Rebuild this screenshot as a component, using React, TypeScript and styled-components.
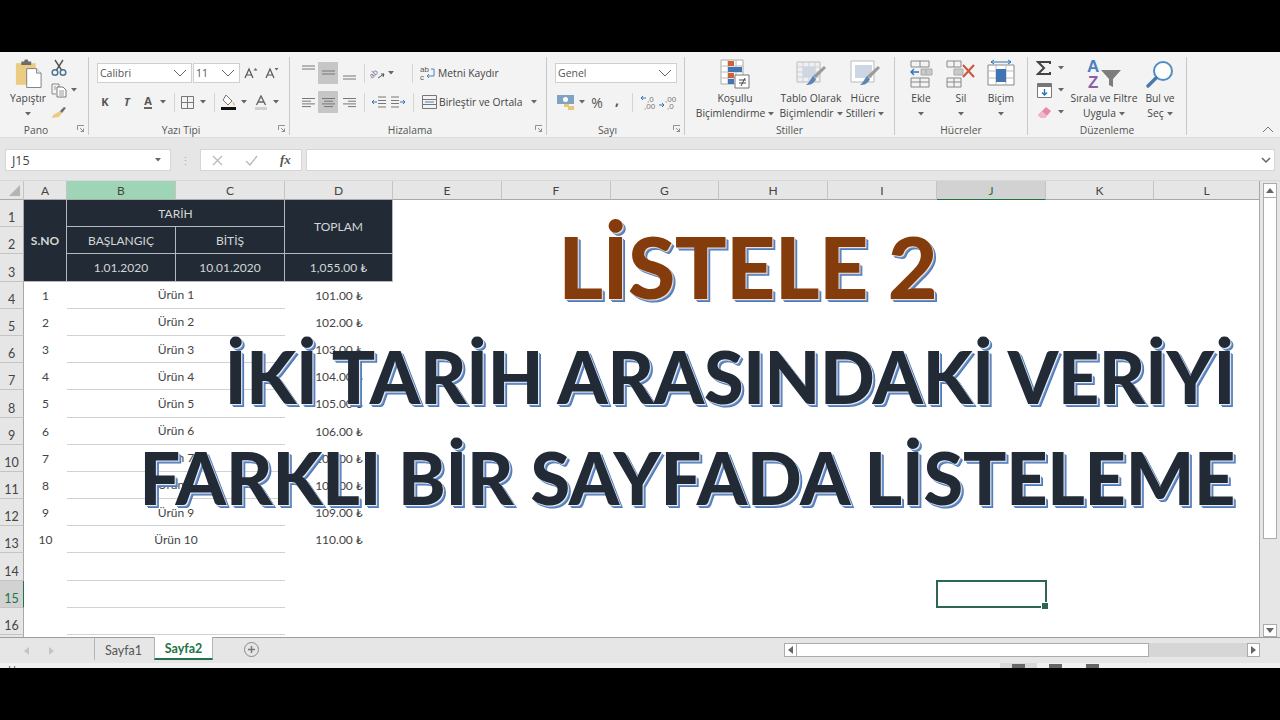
import styled, { createGlobalStyle } from "styled-components";

// styles

const GlobalStyle = createGlobalStyle`
  html, body {
    margin: 0;
    padding: 0;
    background: #000;
    overflow: hidden;
  }
  body {
    font-family: "Open Sans", "Liberation Sans", sans-serif;
  }
`;

const Page = styled.div`
  width: 1280px;
  height: 720px;
  background: #000;
  padding-top: 52px;
  box-sizing: border-box;
`;

const Frame = styled.div`
  width: 1280px;
  height: 616px;
  display: flex;
  flex-direction: column;
  overflow: hidden;
  background: #e6e6e6;
`;

const Ribbon = styled.div`
  height: 86px;
  box-sizing: border-box;
  display: flex;
  background: #f3f3f3;
  border-bottom: 1px solid #dcdcdc;
  padding-top: 5px;
  color: #444;
  font-size: 10.3px;
  flex: none;
`;

const Group = styled.div<{ $w: number }>`
  width: ${(p) => p.$w}px;
  height: 78px;
  flex: none;
  box-sizing: border-box;
  border-right: 1px solid #c8c8c8;
  display: flex;
  flex-direction: column;
`;

const GroupBody = styled.div<{ $pad: number; $row?: boolean }>`
  height: 66px;
  box-sizing: border-box;
  padding-left: ${(p) => p.$pad}px;
  display: flex;
  flex-direction: ${(p) => (p.$row ? "row" : "column")};
`;

const GroupFoot = styled.div<{ $shift?: number }>`
  height: 12px;
  display: grid;
  grid-template-columns: 14px 1fr 14px;
  align-items: center;
  justify-items: center;
  line-height: 12px;
  color: #555;
  span {
    transform: translate(${(p) => p.$shift ?? 0}px, 1px);
  }
`;

const Collapse = styled.div`
  flex: 1;
  display: flex;
  justify-content: flex-end;
  align-items: flex-end;
  padding: 0 6px 2px 0;
  height: 76px;
`;

const Row = styled.div<{ $top: number }>`
  display: flex;
  align-items: center;
  height: 22px;
  margin-top: ${(p) => p.$top}px;
  white-space: nowrap;
`;

const Slot = styled.div<{ $w: number; $active?: boolean }>`
  width: ${(p) => p.$w}px;
  height: 22px;
  flex: none;
  display: flex;
  align-items: center;
  justify-content: center;
  background: ${(p) => (p.$active ? "#c6c6c6" : "transparent")};
  color: #555;
`;

const Sep = styled.div<{ $l: number; $r: number }>`
  width: 1px;
  height: 19px;
  flex: none;
  background: #d4d4d4;
  margin: 0 ${(p) => p.$r}px 0 ${(p) => p.$l}px;
`;

const Select = styled.div<{ $w: number; $ml?: number }>`
  width: ${(p) => p.$w}px;
  height: 20px;
  flex: none;
  box-sizing: border-box;
  margin-left: ${(p) => p.$ml ?? 0}px;
  background: #fff;
  border: 1px solid #cfcfcf;
  display: flex;
  align-items: center;
  justify-content: space-between;
  padding: 0 4px 0 2px;
  font-size: 10.5px;
  color: #555;
`;

const FmtLetter = styled.span<{ $italic?: boolean; $under?: boolean }>`
  font-weight: 700;
  font-size: 11px;
  font-style: ${(p) => (p.$italic ? "italic" : "normal")};
  border-bottom: ${(p) => (p.$under ? "2px solid #666" : "none")};
  line-height: 12px;
  color: #555;
`;

const Percent = styled.span`
  font-size: 14px;
  color: #555;
`;

const Comma = styled.span`
  font-size: 14px;
  font-weight: 700;
  line-height: 10px;
  padding-bottom: 5px;
  color: #555;
`;

const Big = styled.div<{ $w: number }>`
  width: ${(p) => p.$w}px;
  flex: none;
  display: flex;
  flex-direction: column;
  align-items: center;
  white-space: nowrap;
`;

const BigIcon = styled.div`
  height: 34px;
  display: flex;
  align-items: center;
  justify-content: center;
`;

const BigLine = styled.div`
  height: 15px;
  line-height: 15px;
  display: flex;
  align-items: center;
  gap: 3px;
`;

const SmallColumn = styled.div<{ $w: number }>`
  width: ${(p) => p.$w}px;
  flex: none;
  display: flex;
  flex-direction: column;
  justify-content: flex-start;
`;

const SmallRow = styled.div`
  height: 22px;
  display: flex;
  align-items: center;
`;

const Formula = styled.div`
  height: 43px;
  flex: none;
  box-sizing: border-box;
  display: flex;
  align-items: flex-start;
  padding: 11px 5px 0 5px;
  background: #e6e6e6;
  border-bottom: 1px solid #d8d8d8;
`;

const NameBox = styled.div`
  width: 166px;
  height: 22px;
  box-sizing: border-box;
  background: #fff;
  border: 1px solid #d6d6d6;
  display: flex;
  align-items: center;
  justify-content: space-between;
  padding: 0 9px 0 6px;
  font-size: 12.5px;
  color: #444;
`;

const Dots = styled.div`
  width: 29px;
  height: 22px;
  display: flex;
  align-items: center;
  justify-content: center;
  color: #aaa;
  font-size: 11px;
`;

const FxBox = styled.div`
  width: 102px;
  height: 22px;
  box-sizing: border-box;
  background: #fff;
  border: 1px solid #d6d6d6;
  display: flex;
  align-items: center;
  padding-left: 11px;
  gap: 22px;
`;

const FxMark = styled.span`
  font-family: "Liberation Serif", serif;
  font-style: italic;
  font-weight: 700;
  font-size: 13px;
  color: #555;
`;

const FormulaInput = styled.div`
  flex: 1;
  height: 22px;
  margin-left: 4px;
  box-sizing: border-box;
  background: #fff;
  border: 1px solid #d6d6d6;
  display: flex;
  align-items: center;
  justify-content: flex-end;
  padding-right: 3px;
`;

const SheetArea = styled.div`
  height: 456px;
  flex: none;
  display: flex;
  overflow: hidden;
`;

const Sheet = styled.div`
  position: relative;
  width: 1260px;
  height: 456px;
  flex: none;
  overflow: hidden;
  background: #fff;
  border-right: 1px solid #a8a8a8;
  box-sizing: border-box;
`;

const CellGrid = styled.div`
  display: grid;
  grid-template-columns: 24px 43px 109px 109px 108px 109px 109px 108px 109px 109px 109px 108px 106px;
  grid-template-rows: 19px repeat(17, 27.2px);
  font-family: Lato, "Liberation Sans", sans-serif;
  font-size: 12px;
  color: #444;
`;

const Corner = styled.div`
  grid-column: 1;
  grid-row: 1;
  background: #e6e6e6;
  border-right: 1px solid #c4c4c4;
  border-bottom: 1px solid #a8a8a8;
  display: flex;
  align-items: flex-end;
  justify-content: flex-end;
  padding: 0 3px 3px 0;
`;

const ColHead = styled.div<{ $mode?: "sel" | "active" }>`
  box-sizing: border-box;
  background: ${(p) =>
    p.$mode === "sel" ? "#9fd5b7" : p.$mode === "active" ? "#d2d2d2" : "#e6e6e6"};
  border-right: 1px solid #c4c4c4;
  border-bottom: 1px solid ${(p) => (p.$mode === "active" ? "#217346" : "#a8a8a8")};
  display: flex;
  align-items: center;
  justify-content: center;
  color: ${(p) => (p.$mode === "active" ? "#217346" : "#444")};
  font-size: 12px;
`;

const RowHead = styled.div<{ $active?: boolean }>`
  grid-column: 1;
  box-sizing: border-box;
  background: ${(p) => (p.$active ? "#d2d2d2" : "#e6e6e6")};
  border-right: 1px solid ${(p) => (p.$active ? "#217346" : "#a8a8a8")};
  border-bottom: 1px solid #c4c4c4;
  display: flex;
  align-items: flex-end;
  justify-content: center;
  line-height: 17px;
  color: ${(p) => (p.$active ? "#217346" : "#444")};
  font-size: 12.5px;
`;

const HeadCell = styled.div<{ $col: string; $row: string; $bold?: boolean }>`
  grid-column: ${(p) => p.$col};
  grid-row: ${(p) => p.$row};
  box-sizing: border-box;
  background: #222b35;
  border-right: 1px solid #b5b8bc;
  border-bottom: 1px solid #b5b8bc;
  display: flex;
  align-items: center;
  justify-content: center;
  color: #d4d6d8;
  font-size: 12px;
  font-weight: ${(p) => (p.$bold ? 700 : 400)};
`;

const DataCell = styled.div<{ $col: string; $row: number; $line?: boolean }>`
  grid-column: ${(p) => p.$col};
  grid-row: ${(p) => p.$row};
  box-sizing: border-box;
  border-bottom: ${(p) => (p.$line ? "1px solid #d2d2d2" : "none")};
  display: flex;
  align-items: center;
  justify-content: center;
  color: #444;
`;

const SelectedCell = styled.div`
  grid-column: 11;
  grid-row: 16;
  position: relative;
  box-sizing: border-box;
  margin: -1px -1px 0 -1px;
  border: 2px solid #2f6650;
`;

const FillHandle = styled.div`
  position: absolute;
  right: -4px;
  bottom: -4px;
  width: 6px;
  height: 6px;
  background: #2f6650;
  border: 1px solid #fff;
`;

const TitleLayer = styled.div`
  position: absolute;
  top: 0;
  left: 0;
  right: 0;
  display: flex;
  flex-direction: column;
  align-items: flex-end;
  padding: 30px 24px 0 0;
  font-family: Lato, "Open Sans", sans-serif;
  font-weight: 900;
  pointer-events: none;
  white-space: nowrap;
`;

const TitleMain = styled.div`
  font-size: 86px;
  line-height: 110px;
  height: 110px;
  margin-right: 298px;
  letter-spacing: -0.6px;
  color: #843c0c;
  text-shadow: 1px 1px 0 #f0e0d6, 2px 2px 0 #6a92cc, 3px 3px 0 #5079b5;
`;

const TitleLine = styled.div<{ $top: number; $track: number }>`
  font-size: 72px;
  line-height: 90px;
  height: 90px;
  margin-top: ${(p) => p.$top}px;
  letter-spacing: ${(p) => p.$track}px;
  color: #222a35;
  text-shadow: 1px 1px 0 #e8eef8, 2px 2px 0 #6a92cc, 3px 3px 0 #5079b5;
`;

const VScroll = styled.div`
  width: 20px;
  flex: none;
  display: flex;
  flex-direction: column;
  align-items: center;
  padding-top: 2px;
  box-sizing: border-box;
`;

const ScrollBtn = styled.div<{ $w: number; $h: number }>`
  width: ${(p) => p.$w}px;
  height: ${(p) => p.$h}px;
  flex: none;
  box-sizing: border-box;
  background: #fff;
  border: 1px solid #ababab;
  display: flex;
  align-items: center;
  justify-content: center;
`;

const VThumb = styled.div`
  width: 14px;
  height: 341px;
  box-sizing: border-box;
  background: #fff;
  border: 1px solid #ababab;
  border-top: none;
`;

const VTrack = styled.div`
  flex: 1;
  width: 14px;
`;

const TabBar = styled.div`
  height: 26px;
  flex: none;
  box-sizing: border-box;
  display: flex;
  align-items: flex-start;
  background: #e6e6e6;
  border-top: 1px solid #9d9d9d;
  font-family: Lato, "Liberation Sans", sans-serif;
  font-size: 12.5px;
  color: #555;
`;

const TabNav = styled.div`
  width: 94px;
  height: 25px;
  display: flex;
  align-items: center;
  padding-left: 24px;
  gap: 20px;
  box-sizing: border-box;
`;

const Tab = styled.div<{ $active?: boolean }>`
  height: ${(p) => (p.$active ? "23px" : "22px")};
  width: ${(p) => (p.$active ? "59px" : "60px")};
  margin-top: ${(p) => (p.$active ? "-1px" : "0")};
  padding: ${(p) => (p.$active ? "2px 0 0 0" : "2px 2px 0 0")};
  box-sizing: border-box;
  display: flex;
  align-items: center;
  justify-content: center;
  background: ${(p) => (p.$active ? "#fff" : "transparent")};
  border-left: 1px solid #b4b4b4;
  border-right: ${(p) => (p.$active ? "1px solid #b4b4b4" : "none")};
  border-bottom: ${(p) => (p.$active ? "2px solid #217346" : "none")};
  color: ${(p) => (p.$active ? "#217346" : "#555")};
  font-weight: ${(p) => (p.$active ? 700 : 400)};
`;

const AddSheet = styled.div`
  width: 15px;
  height: 15px;
  margin: 4px 0 0 31px;
  box-sizing: border-box;
  border: 1.5px solid #8a8a8a;
  border-radius: 50%;
  display: flex;
  align-items: center;
  justify-content: center;
`;

const HScroll = styled.div`
  width: 476px;
  height: 14px;
  margin: 5px 20px 0 auto;
  display: flex;
  background: #d6d6d6;
`;

const HThumb = styled.div`
  width: 352px;
  height: 14px;
  box-sizing: border-box;
  background: #fff;
  border: 1px solid #ababab;
  border-left: none;
`;

const HTrack = styled.div`
  flex: 1;
`;

const Status = styled.div`
  height: 5px;
  flex: none;
  overflow: hidden;
  display: flex;
  background: #f1f1f1;
  font-size: 11px;
  line-height: 14px;
  padding-left: 8px;
  color: #555;
`;

const ViewGroup = styled.div`
  margin-left: auto;
  margin-right: 169px;
  display: flex;
  height: 5px;
`;

const ViewItem = styled.div<{ $active?: boolean }>`
  width: 37px;
  height: 5px;
  padding-top: 1px;
  box-sizing: border-box;
  display: flex;
  justify-content: center;
  background: ${(p) => (p.$active ? "#d8d8d8" : "transparent")};
`;

const ViewMark = styled.div`
  width: 13px;
  height: 4px;
  background: #666;
`;

// icons

const Caret = () => (
  <svg width="6" height="4" viewBox="0 0 6 4">
    <path d="M0 0h6L3 3.5z" fill="#666" />
  </svg>
);

const Chevron = () => (
  <svg width="14" height="8" viewBox="0 0 14 8">
    <path d="M1 1l6 6 6-6" fill="none" stroke="#666" />
  </svg>
);

const Launcher = () => (
  <svg width="8" height="8" viewBox="0 0 8 8">
    <path d="M.5 5V.5H7M3 3l3.5 3.5M6.5 3.5v3h-3" fill="none" stroke="#777" strokeWidth=".8" />
  </svg>
);

const PasteIcon = () => (
  <svg width="27" height="30" viewBox="0 0 30 32">
    <path d="M1 4h22v24H1z" fill="#eccb83" />
    <path d="M7 2h3l1-2h3l1 2h3v4H7z" fill="#6d6d6d" />
    <path d="M13 10h11l5 5v16H13z" fill="#fff" stroke="#777" />
    <path d="M24 10v5h5" fill="#eee" stroke="#777" />
  </svg>
);

const ScissorsIcon = () => (
  <svg width="16" height="18" viewBox="0 0 16 18">
    <circle cx="4" cy="13.5" r="2.8" fill="none" stroke="#4d7396" strokeWidth="1.5" />
    <circle cx="12" cy="13.5" r="2.8" fill="none" stroke="#4d7396" strokeWidth="1.5" />
    <path d="M5.5 11L12 1M10.5 11L4 1" stroke="#555" strokeWidth="1.4" fill="none" />
  </svg>
);

const CopyIcon = () => (
  <svg width="16" height="15" viewBox="0 0 16 15">
    <path d="M1 1h7v3M1 1v10h4" fill="none" stroke="#888" />
    <path d="M6 4h6l3 3v7H6z" fill="#fff" stroke="#777" />
    <path d="M8 8h5M8 10h5M8 12h5M3 4h2M3 6h2" stroke="#999" />
  </svg>
);

const BrushIcon = () => (
  <svg width="16" height="14" viewBox="0 0 16 14">
    <path d="M9 6l2 2-3 4-7 1 1-3z" fill="#eccb83" />
    <path d="M9 6l4-4 2 1-4 5z" fill="#6f6f6f" />
  </svg>
);

const GrowA = ({ down }: { down?: boolean }) => (
  <svg width="14" height="12" viewBox="0 0 14 12">
    <path d="M1 11L5 2l4 9M2.6 8h4.8" fill="none" stroke="#555" strokeWidth="1.2" />
    <path d={down ? "M9.5 1h4L11.5 3.5z" : "M9.5 3.5h4L11.5 1z"} fill="#666" />
  </svg>
);

const BorderIcon = () => (
  <svg width="13" height="13" viewBox="0 0 13 13">
    <path d="M.5.5h12v12H.5zM6.5.5v12M.5 6.5h12" fill="none" stroke="#777" />
  </svg>
);

const FillIcon = () => (
  <svg width="16" height="16" viewBox="0 0 16 16">
    <path d="M5 1l6 6-4 4-5-5z" fill="#fff" stroke="#777" />
    <path d="M11 7l3 3-1 2z" fill="#e8b04a" />
    <path d="M0 13h15v3H0z" fill="#111" />
  </svg>
);

const ColorA = () => (
  <svg width="14" height="15" viewBox="0 0 14 15">
    <path d="M2.5 10L7 1l4.5 9M4 7h6" fill="none" stroke="#666" strokeWidth="1.4" />
    <path d="M1 12h12v3H1z" fill="#d0d0d0" />
  </svg>
);

const AlignLines = ({ kind }: { kind: "left" | "center" | "right" }) => {
  const x1 = { left: [1, 1, 1, 1], center: [1, 3, 1, 3], right: [1, 6, 1, 6] }[kind];
  const x2 = { left: [14, 10, 14, 10], center: [14, 12, 14, 12], right: [14, 14, 14, 14] }[kind];
  return (
    <svg width="15" height="11" viewBox="0 0 15 11">
      {x1.map((x, i) => (
        <path key={i} d={`M${x} ${1.5 + i * 2.7}H${x2[i]}`} stroke="#777" />
      ))}
    </svg>
  );
};

const VLines = ({ at }: { at: number }) => (
  <svg width="15" height="16" viewBox="0 0 15 16">
    <path d={`M1 ${at}h13M1 ${at + 3}h13`} stroke="#777" />
  </svg>
);

const OrientIcon = () => (
  <svg width="16" height="15" viewBox="0 0 16 15">
    <text x="2" y="13" fontSize="8" fill="#7a6a96" fontFamily="Liberation Sans" transform="rotate(-45 2 13)">
      ab
    </text>
    <path d="M8 12l6-4M14 8l-3 0M14 8l-1 3" stroke="#555" fill="none" />
  </svg>
);

const WrapIcon = () => (
  <svg width="16" height="15" viewBox="0 0 16 15">
    <text x="0" y="6" fontSize="8" fill="#555" fontFamily="Liberation Sans">ab</text>
    <text x="0" y="14" fontSize="8" fill="#555" fontFamily="Liberation Sans">c</text>
    <path d="M11 3h3v7H7M9 8l-2 2 2 2" stroke="#4f81bd" fill="none" />
  </svg>
);

const MergeIcon = () => (
  <svg width="15" height="14" viewBox="0 0 15 14">
    <path d="M.5.5h14v13H.5zM.5 4.5h14M.5 9.5h14" fill="none" stroke="#777" />
    <path d="M3 7h9" stroke="#4f81bd" />
  </svg>
);

const IndentIcon = ({ flip }: { flip?: boolean }) => (
  <svg width="15" height="12" viewBox="0 0 15 12" style={flip ? { transform: "scaleX(-1)" } : undefined}>
    <path d="M7 1h8M7 4.5h8M7 7.5h8M7 11h8" stroke="#777" />
    <path d="M6 6H1M3 4L1 6l2 2" stroke="#2f75b5" fill="none" />
  </svg>
);

const CurrencyIcon = () => (
  <svg width="19" height="17" viewBox="0 0 19 17">
    <path d="M0 1h17v9H0z" fill="#7fa3c0" />
    <circle cx="8.5" cy="5.5" r="2.5" fill="#fff" />
    <path d="M7 10h5v3H7zM11 12h6v4h-6z" fill="#e8c77a" />
  </svg>
);

const DecimalIcon = ({ flip }: { flip?: boolean }) => (
  <svg width="18" height="15" viewBox="0 0 18 15">
    <text x={flip ? 6 : 8} y="7" fontSize="8" fill="#777" fontFamily="Liberation Sans">
      {flip ? ",00" : ",0"}
    </text>
    <text x={flip ? 8 : 5} y="14" fontSize="8" fill="#777" fontFamily="Liberation Sans">
      {flip ? ",0" : ",00"}
    </text>
    <path d={flip ? "M0 10h5M3 8l2 2-2 2" : "M7 3H2M4 1L2 3l2 2"} stroke="#2f75b5" fill="none" />
  </svg>
);

const CondIcon = () => (
  <svg width="30" height="30" viewBox="0 0 30 30">
    <path d="M1 1h22v24H1z" fill="#fff" stroke="#aaa" />
    <path d="M1 7h22M1 13h22M1 19h22M8 1v24M16 1v24" stroke="#bbb" />
    <path d="M8 2h6v5H8zM8 14h6v5H8z" fill="#d0603a" />
    <path d="M8 8h14v5H8zM8 20h6v5H8z" fill="#3f74b5" />
    <path d="M15 16h14v13H15z" fill="#fff" stroke="#777" />
    <path d="M19 21h7M19 24h7M25 19l-4 8" stroke="#444" />
  </svg>
);

const TableStyleIcon = () => (
  <svg width="30" height="30" viewBox="0 0 30 30">
    <path d="M1 3h23v20H1z" fill="#eef0f3" stroke="#bbb" />
    <path d="M1 8h23M1 13h23M1 18h23M7 3v20M13 3v20M19 3v20" stroke="#cfcfcf" />
    <path d="M7 8h12v10H7z" fill="#cdd7e4" />
    <path d="M28 7l2 2-10 10-3-2z" fill="#9a9a9a" />
    <path d="M17 17l3 3c-2 5-6 6-10 6 3-2 4-6 7-9z" fill="#5b87b2" />
  </svg>
);

const CellStyleIcon = () => (
  <svg width="30" height="30" viewBox="0 0 30 30">
    <path d="M1 2h23v21H1z" fill="#fff" stroke="#bbb" />
    <path d="M5 6h17v13H5z" fill="#cdd7e4" />
    <path d="M28 7l2 2-10 10-3-2z" fill="#9a9a9a" />
    <path d="M17 17l3 3c-2 5-6 6-10 6 3-2 4-6 7-9z" fill="#5b87b2" />
  </svg>
);

const InsertIcon = () => (
  <svg width="26" height="28" viewBox="0 0 26 28">
    <path d="M3 1h18v6H3zM12 1v6M3 18h18v9H3zM12 18v9M3 22h18" fill="none" stroke="#888" />
    <path d="M13 9h11v6H13zM18 9v6" fill="#c9c9c9" stroke="#aaa" />
    <path d="M11 12H3M6 9l-3 3 3 3" stroke="#2f75b5" strokeWidth="1.4" fill="none" />
  </svg>
);

const DeleteIcon = () => (
  <svg width="30" height="28" viewBox="0 0 30 28">
    <path d="M1 1h14v6H1zM8 1v6M1 18h14v9H1zM8 18v9M1 22h14" fill="none" stroke="#888" />
    <path d="M8 9h9v6H8z" fill="#c9c9c9" stroke="#aaa" />
    <path d="M17 5l11 12M28 5L17 17" stroke="#c8573c" strokeWidth="2" fill="none" />
  </svg>
);

const FormatIcon = () => (
  <svg width="28" height="30" viewBox="0 0 28 30">
    <path d="M1 6h26v20H1z" fill="#fff" stroke="#888" />
    <path d="M1 12h26M1 19h26M9 6v20M19 6v20" stroke="#bbb" />
    <path d="M9 10h10v13H9z" fill="#3f74b5" />
    <path d="M4 3h20M4 3l3-2M4 3l3 2M24 3l-3-2M24 3l-3 2" stroke="#2f75b5" fill="none" />
  </svg>
);

const SigmaIcon = () => (
  <svg width="16" height="14" viewBox="0 0 16 14">
    <path d="M14 3V1H2l6 6-6 6h12v-2" fill="none" stroke="#444" strokeWidth="2" />
  </svg>
);

const FillDownIcon = () => (
  <svg width="15" height="15" viewBox="0 0 15 15">
    <path d="M.5.5h14v14H.5z" fill="#fff" stroke="#777" />
    <path d="M1 1h13v3H1z" fill="#777" />
    <path d="M7.5 6v6M5 9.5l2.5 2.5L10 9.5" stroke="#2f75b5" strokeWidth="1.4" fill="none" />
  </svg>
);

const EraserIcon = () => (
  <svg width="16" height="13" viewBox="0 0 16 13">
    <path d="M10 1l5 4-6 7H5L2 9z" fill="#e58aa5" />
    <path d="M2 9l3 3h4l2-2.5L6 5z" fill="#f0b9c8" />
  </svg>
);

const SortIcon = () => (
  <svg width="34" height="34" viewBox="0 0 34 34">
    <text x="0" y="15" fontSize="17" fontWeight="700" fill="#4f81bd" fontFamily="Liberation Sans">A</text>
    <text x="1" y="31" fontSize="17" fontWeight="700" fill="#8a5fa8" fontFamily="Liberation Sans">Z</text>
    <path d="M14 13h20l-8 9v8l-4-2v-6z" fill="#7d7d7d" />
  </svg>
);

const FindIcon = () => (
  <svg width="28" height="28" viewBox="0 0 28 28">
    <circle cx="17" cy="11" r="9" fill="#fff" stroke="#4f8ec4" strokeWidth="2" />
    <path d="M10 18L2 26" stroke="#4a78a8" strokeWidth="3.4" strokeLinecap="round" />
  </svg>
);

const TriDown = () => (
  <svg width="8" height="5" viewBox="0 0 8 5">
    <path d="M0 0h8L4 5z" fill="#666" />
  </svg>
);

const TriUp = () => (
  <svg width="8" height="5" viewBox="0 0 8 5">
    <path d="M0 5h8L4 0z" fill="#666" />
  </svg>
);

const TriLeft = ({ color = "#666" }: { color?: string }) => (
  <svg width="5" height="8" viewBox="0 0 5 8">
    <path d="M5 0v8L0 4z" fill={color} />
  </svg>
);

const TriRight = ({ color = "#666" }: { color?: string }) => (
  <svg width="5" height="8" viewBox="0 0 5 8">
    <path d="M0 0v8l5-4z" fill={color} />
  </svg>
);

// data

const COLUMNS = ["A", "B", "C", "D", "E", "F", "G", "H", "I", "J", "K", "L"];
const ROW_NUMBERS = Array.from({ length: 17 }, (_, i) => i + 1);
const ITEMS = Array.from({ length: 10 }, (_, i) => i + 1);
const EMPTY_ROWS = [14, 15, 16, 17];

const colMode = (c: string) => (c === "B" ? "sel" : c === "J" ? "active" : undefined);

// main app

export default function App() {
  return (
    <Page>
      <GlobalStyle />
      <Frame>
        <Ribbon>
          <Group $w={89}>
            <GroupBody $pad={8} $row>
              <Big $w={40}>
                <BigIcon>
                  <PasteIcon />
                </BigIcon>
                <BigLine>Yapıştır</BigLine>
                <BigLine>
                  <Caret />
                </BigLine>
              </Big>
              <SmallColumn $w={36}>
                <SmallRow>
                  <Slot $w={22}>
                    <ScissorsIcon />
                  </Slot>
                </SmallRow>
                <SmallRow>
                  <Slot $w={22}>
                    <CopyIcon />
                  </Slot>
                  <Slot $w={8}>
                    <Caret />
                  </Slot>
                </SmallRow>
                <SmallRow>
                  <Slot $w={22}>
                    <BrushIcon />
                  </Slot>
                </SmallRow>
              </SmallColumn>
            </GroupBody>
            <GroupFoot $shift={-8}>
              <i />
              <span>Pano</span>
              <Launcher />
            </GroupFoot>
          </Group>

          <Group $w={201}>
            <GroupBody $pad={8}>
              <Row $top={5}>
                <Select $w={95}>
                  Calibri
                  <Chevron />
                </Select>
                <Select $w={47} $ml={1}>
                  11
                  <Chevron />
                </Select>
                <Slot $w={21}>
                  <GrowA />
                </Slot>
                <Slot $w={22}>
                  <GrowA down />
                </Slot>
              </Row>
              <Row $top={7}>
                <Slot $w={16}>
                  <FmtLetter>K</FmtLetter>
                </Slot>
                <Slot $w={28}>
                  <FmtLetter $italic>T</FmtLetter>
                </Slot>
                <Slot $w={14}>
                  <FmtLetter $under>A</FmtLetter>
                </Slot>
                <Slot $w={16}>
                  <Caret />
                </Slot>
                <Sep $l={3} $r={2} />
                <Slot $w={20}>
                  <BorderIcon />
                </Slot>
                <Slot $w={12}>
                  <Caret />
                </Slot>
                <Sep $l={5} $r={4} />
                <Slot $w={20}>
                  <FillIcon />
                </Slot>
                <Slot $w={10}>
                  <Caret />
                </Slot>
                <Slot $w={24}>
                  <ColorA />
                </Slot>
                <Slot $w={6}>
                  <Caret />
                </Slot>
              </Row>
            </GroupBody>
            <GroupFoot $shift={-8}>
              <i />
              <span>Yazı Tipi</span>
              <Launcher />
            </GroupFoot>
          </Group>

          <Group $w={257}>
            <GroupBody $pad={8}>
              <Row $top={5}>
                <Slot $w={20}>
                  <VLines at={1} />
                </Slot>
                <Slot $w={20} $active>
                  <VLines at={6} />
                </Slot>
                <Slot $w={22}>
                  <VLines at={11} />
                </Slot>
                <Sep $l={4} $r={3} />
                <Slot $w={20}>
                  <OrientIcon />
                </Slot>
                <Slot $w={6}>
                  <Caret />
                </Slot>
                <Sep $l={18} $r={5} />
                <Slot $w={20}>
                  <WrapIcon />
                </Slot>
                <span>Metni Kaydır</span>
              </Row>
              <Row $top={7}>
                <Slot $w={20}>
                  <AlignLines kind="left" />
                </Slot>
                <Slot $w={20} $active>
                  <AlignLines kind="center" />
                </Slot>
                <Slot $w={22}>
                  <AlignLines kind="right" />
                </Slot>
                <Sep $l={4} $r={3} />
                <Slot $w={20}>
                  <IndentIcon />
                </Slot>
                <Slot $w={20}>
                  <IndentIcon flip />
                </Slot>
                <Sep $l={5} $r={5} />
                <Slot $w={20}>
                  <MergeIcon />
                </Slot>
                <span>Birleştir ve Ortala</span>
                <Slot $w={24}>
                  <Caret />
                </Slot>
              </Row>
            </GroupBody>
            <GroupFoot $shift={-8}>
              <i />
              <span>Hizalama</span>
              <Launcher />
            </GroupFoot>
          </Group>

          <Group $w={138}>
            <GroupBody $pad={8}>
              <Row $top={5}>
                <Select $w={122}>
                  Genel
                  <Chevron />
                </Select>
              </Row>
              <Row $top={7}>
                <Slot $w={22}>
                  <CurrencyIcon />
                </Slot>
                <Slot $w={10}>
                  <Caret />
                </Slot>
                <Slot $w={20}>
                  <Percent>%</Percent>
                </Slot>
                <Slot $w={20}>
                  <Comma>,</Comma>
                </Slot>
                <Sep $l={5} $r={5} />
                <Slot $w={20}>
                  <DecimalIcon />
                </Slot>
                <Slot $w={20}>
                  <DecimalIcon flip />
                </Slot>
              </Row>
            </GroupBody>
            <GroupFoot $shift={-8}>
              <i />
              <span>Sayı</span>
              <Launcher />
            </GroupFoot>
          </Group>

          <Group $w={210}>
            <GroupBody $pad={5} $row>
              <Big $w={90}>
                <BigIcon>
                  <CondIcon />
                </BigIcon>
                <BigLine>Koşullu</BigLine>
                <BigLine>
                  Biçimlendirme
                  <Caret />
                </BigLine>
              </Big>
              <Big $w={62}>
                <BigIcon>
                  <TableStyleIcon />
                </BigIcon>
                <BigLine>Tablo Olarak</BigLine>
                <BigLine>
                  Biçimlendir
                  <Caret />
                </BigLine>
              </Big>
              <Big $w={46}>
                <BigIcon>
                  <CellStyleIcon />
                </BigIcon>
                <BigLine>Hücre</BigLine>
                <BigLine>
                  Stilleri
                  <Caret />
                </BigLine>
              </Big>
            </GroupBody>
            <GroupFoot>
              <i />
              <span>Stiller</span>
              <i />
            </GroupFoot>
          </Group>

          <Group $w={133}>
            <GroupBody $pad={6} $row>
              <Big $w={40}>
                <BigIcon>
                  <InsertIcon />
                </BigIcon>
                <BigLine>Ekle</BigLine>
                <BigLine>
                  <Caret />
                </BigLine>
              </Big>
              <Big $w={40}>
                <BigIcon>
                  <DeleteIcon />
                </BigIcon>
                <BigLine>Sil</BigLine>
                <BigLine>
                  <Caret />
                </BigLine>
              </Big>
              <Big $w={40}>
                <BigIcon>
                  <FormatIcon />
                </BigIcon>
                <BigLine>Biçim</BigLine>
                <BigLine>
                  <Caret />
                </BigLine>
              </Big>
            </GroupBody>
            <GroupFoot>
              <i />
              <span>Hücreler</span>
              <i />
            </GroupFoot>
          </Group>

          <Group $w={159}>
            <GroupBody $pad={6} $row>
              <SmallColumn $w={34}>
                <SmallRow>
                  <Slot $w={20}>
                    <SigmaIcon />
                  </Slot>
                  <Slot $w={14}>
                    <Caret />
                  </Slot>
                </SmallRow>
                <SmallRow>
                  <Slot $w={20}>
                    <FillDownIcon />
                  </Slot>
                  <Slot $w={14}>
                    <Caret />
                  </Slot>
                </SmallRow>
                <SmallRow>
                  <Slot $w={20}>
                    <EraserIcon />
                  </Slot>
                  <Slot $w={14}>
                    <Caret />
                  </Slot>
                </SmallRow>
              </SmallColumn>
              <Big $w={72}>
                <BigIcon>
                  <SortIcon />
                </BigIcon>
                <BigLine>Sırala ve Filtre</BigLine>
                <BigLine>
                  Uygula
                  <Caret />
                </BigLine>
              </Big>
              <Big $w={40}>
                <BigIcon>
                  <FindIcon />
                </BigIcon>
                <BigLine>Bul ve</BigLine>
                <BigLine>
                  Seç
                  <Caret />
                </BigLine>
              </Big>
            </GroupBody>
            <GroupFoot>
              <i />
              <span>Düzenleme</span>
              <i />
            </GroupFoot>
          </Group>

          <Collapse>
            <svg width="12" height="7" viewBox="0 0 12 7">
              <path d="M1 6l5-5 5 5" fill="none" stroke="#777" />
            </svg>
          </Collapse>
        </Ribbon>

        <Formula>
          <NameBox>
            J15
            <Caret />
          </NameBox>
          <Dots>⋮</Dots>
          <FxBox>
            <svg width="11" height="11" viewBox="0 0 11 11">
              <path d="M1 1l9 9M10 1l-9 9" stroke="#bbb" strokeWidth="1.4" />
            </svg>
            <svg width="13" height="11" viewBox="0 0 13 11">
              <path d="M1 6l4 4 7-9" fill="none" stroke="#bbb" strokeWidth="1.4" />
            </svg>
            <FxMark>fx</FxMark>
          </FxBox>
          <FormulaInput>
            <svg width="10" height="7" viewBox="0 0 10 7">
              <path d="M1 1l4 4 4-4" fill="none" stroke="#666" strokeWidth="1.5" />
            </svg>
          </FormulaInput>
        </Formula>

        <SheetArea>
          <Sheet>
            <CellGrid>
              <Corner>
                <svg width="11" height="11" viewBox="0 0 11 11">
                  <path d="M11 0v11H0z" fill="#b4b4b4" />
                </svg>
              </Corner>
              {COLUMNS.map((c) => (
                <ColHead key={c} $mode={colMode(c)}>
                  {c}
                </ColHead>
              ))}
              {ROW_NUMBERS.map((n) => (
                <RowHead key={n} $active={n === 15} style={{ gridRow: n + 1 }}>
                  {n}
                </RowHead>
              ))}

              <HeadCell $col="2" $row="2 / span 3" $bold>
                S.NO
              </HeadCell>
              <HeadCell $col="3 / span 2" $row="2">
                TARİH
              </HeadCell>
              <HeadCell $col="5" $row="2 / span 2">
                TOPLAM
              </HeadCell>
              <HeadCell $col="3" $row="3">
                BAŞLANGIÇ
              </HeadCell>
              <HeadCell $col="4" $row="3">
                BİTİŞ
              </HeadCell>
              <HeadCell $col="3" $row="4">
                1.01.2020
              </HeadCell>
              <HeadCell $col="4" $row="4">
                10.01.2020
              </HeadCell>
              <HeadCell $col="5" $row="4">
                1,055.00 ₺
              </HeadCell>

              {ITEMS.map((n) => (
                <DataCell key={`no${n}`} $col="2" $row={n + 4}>
                  {n}
                </DataCell>
              ))}
              {ITEMS.map((n) => (
                <DataCell key={`name${n}`} $col="3 / span 2" $row={n + 4} $line>
                  Ürün {n}
                </DataCell>
              ))}
              {ITEMS.map((n) => (
                <DataCell key={`sum${n}`} $col="5" $row={n + 4}>
                  {100 + n}.00 ₺
                </DataCell>
              ))}
              {EMPTY_ROWS.map((n) => (
                <DataCell key={`empty${n}`} $col="3 / span 2" $row={n + 1} $line />
              ))}

              <SelectedCell>
                <FillHandle />
              </SelectedCell>
            </CellGrid>

            <TitleLayer>
              <TitleMain>LİSTELE 2</TitleMain>
              <TitleLine $top={10} $track={-0.4}>
                İKİ TARİH ARASINDAKİ VERİYİ
              </TitleLine>
              <TitleLine $top={11} $track={-0.25}>
                FARKLI BİR SAYFADA LİSTELEME
              </TitleLine>
            </TitleLayer>
          </Sheet>

          <VScroll>
            <ScrollBtn $w={14} $h={15}>
              <TriUp />
            </ScrollBtn>
            <VThumb />
            <VTrack />
            <ScrollBtn $w={14} $h={13}>
              <TriDown />
            </ScrollBtn>
          </VScroll>
        </SheetArea>

        <TabBar>
          <TabNav>
            <TriLeft color="#c4c4c4" />
            <TriRight color="#c4c4c4" />
          </TabNav>
          <Tab>Sayfa1</Tab>
          <Tab $active>Sayfa2</Tab>
          <AddSheet>
            <svg width="9" height="9" viewBox="0 0 9 9">
              <path d="M4.5 1v7M1 4.5h7" stroke="#777" strokeWidth="1.4" />
            </svg>
          </AddSheet>
          <HScroll>
            <ScrollBtn $w={13} $h={14}>
              <TriLeft />
            </ScrollBtn>
            <HThumb />
            <HTrack />
            <ScrollBtn $w={13} $h={14}>
              <TriRight />
            </ScrollBtn>
          </HScroll>
        </TabBar>

        <Status>
          Hazır
          <ViewGroup>
            <ViewItem $active>
              <ViewMark />
            </ViewItem>
            <ViewItem>
              <ViewMark />
            </ViewItem>
            <ViewItem>
              <ViewMark />
            </ViewItem>
          </ViewGroup>
        </Status>
      </Frame>
    </Page>
  );
}
